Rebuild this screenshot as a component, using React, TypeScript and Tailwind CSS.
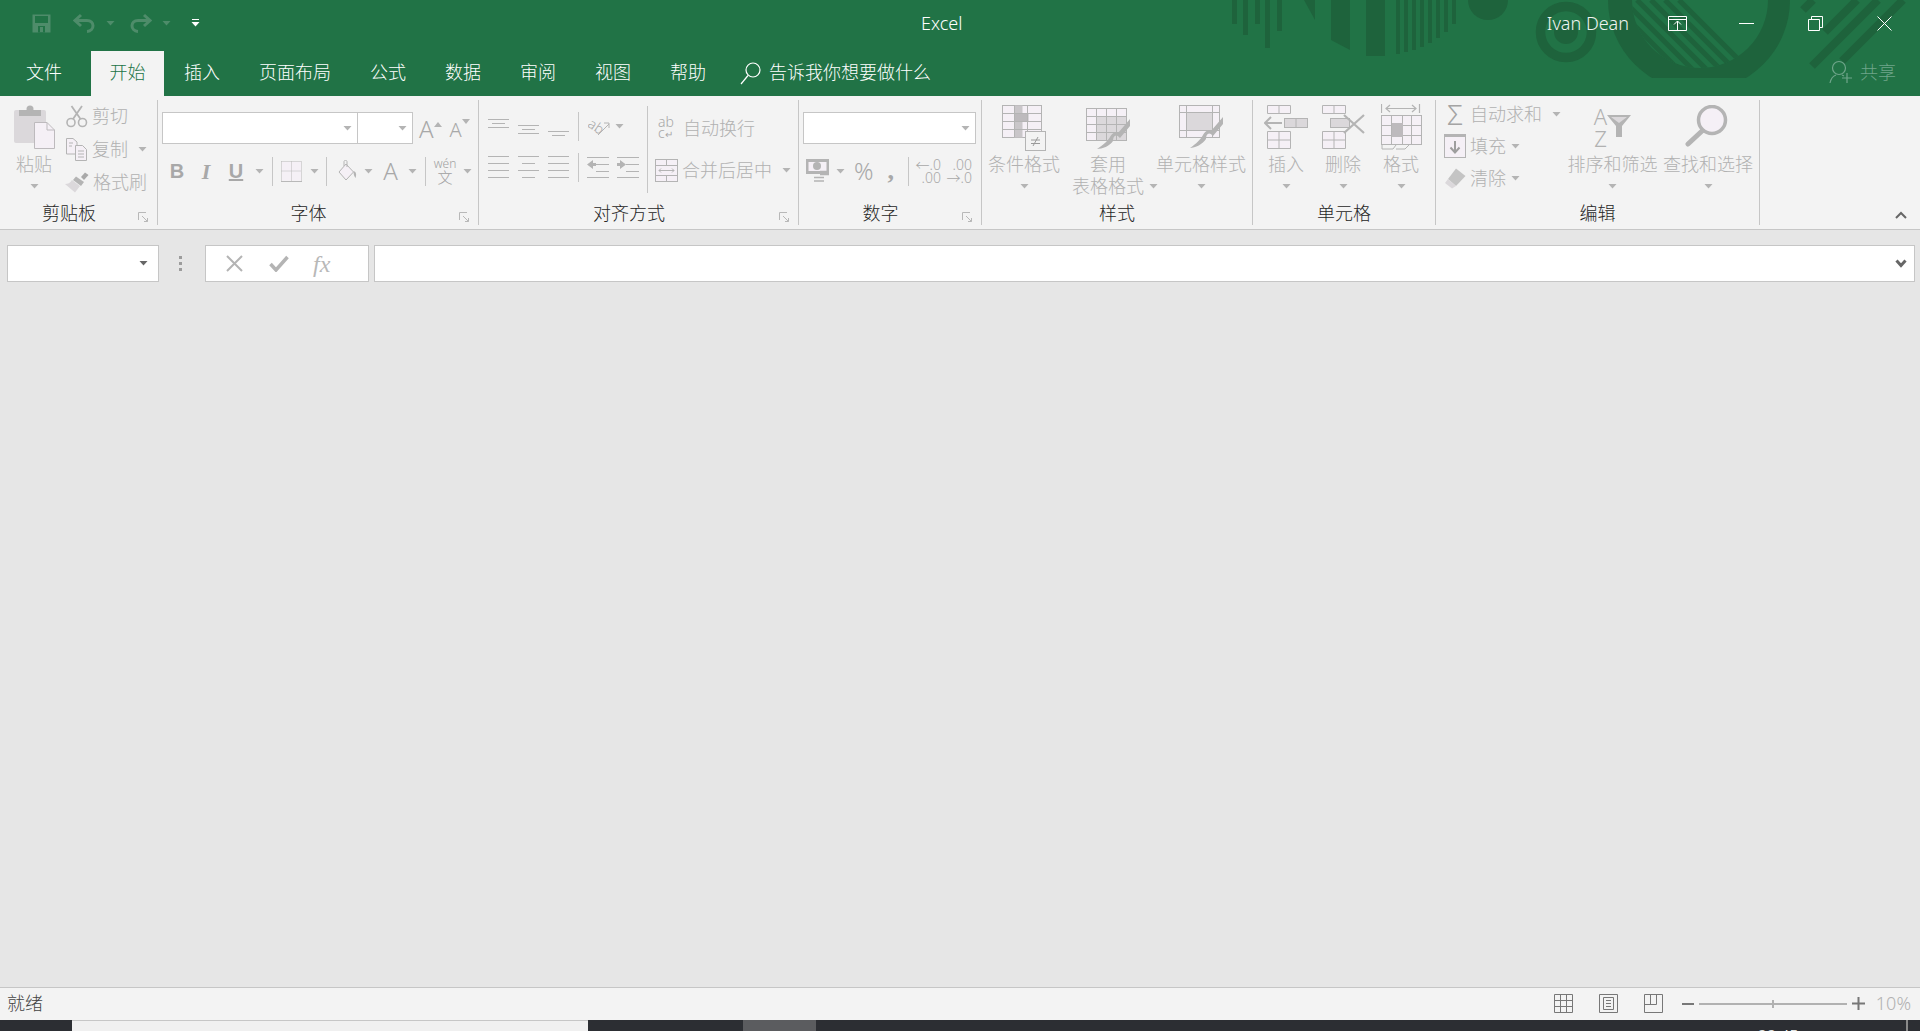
import type { ReactNode } from "react";

const G = "#b4b4b4"; // disabled icon stroke
const L = "#f5f0f6"; // disabled icon fill
const M = "#dbd8db"; // disabled icon mid fill

function Caret({ className = "", color = G }: { className?: string; color?: string }) {
  return (
    <svg width="9" height="5" viewBox="0 0 9 5" className={`shrink-0 ${className}`}>
      <path d="M0.5 0H8.5L4.5 4.5z" fill={color} />
    </svg>
  );
}

function Sep({ className = "" }: { className?: string }) {
  return <div className={`h-[29px] w-px shrink-0 bg-[#c6c6c6] ${className}`} />;
}

function Launcher() {
  return (
    <svg width="11" height="11" viewBox="0 0 11 11" className="mb-[2px] mr-[8px] shrink-0">
      <path d="M0.5 8V0.5H8M4 4L9.5 9.5M6 9.5H9.5V6" fill="none" stroke="#b8b8b8" />
    </svg>
  );
}

function Group({ className, label, launcher, children }: { className: string; label: string; launcher?: boolean; children: ReactNode }) {
  return (
    <div className={`flex h-[125px] shrink-0 flex-col border-r border-[#c6c6c6] ${className}`}>
      <div className="h-[104px]">{children}</div>
      <div className="flex h-[21px] items-end">
        <span className="flex-1 text-center text-[18px] leading-[24px] text-[#262626]">{label}</span>
        {launcher && <Launcher />}
      </div>
    </div>
  );
}

function BigButton({ className, icon, lines, caretInline }: { className: string; icon: ReactNode; lines: string[]; caretInline?: boolean }) {
  return (
    <div className={`flex shrink-0 flex-col items-center text-[18px] leading-[22px] text-[#b1b1b1] ${className}`}>
      <div className="flex h-[53px] justify-center pt-[5px]">{icon}</div>
      <div className="h-[22px] whitespace-nowrap">{lines[0]}</div>
      {caretInline ? (
        <div className="flex h-[22px] items-center gap-[5px] whitespace-nowrap pl-[14px]">
          {lines[1]}
          <Caret />
        </div>
      ) : (
        <div className="flex h-[22px] items-center">
          <Caret />
        </div>
      )}
    </div>
  );
}

function Box({ className }: { className: string }) {
  return (
    <div className={`flex h-[32px] shrink-0 items-center justify-end border border-[#c6c6c6] bg-white pr-[5px] ${className}`}>
      <Caret />
    </div>
  );
}

function SmallRow({ className = "", icon, text, caret, caretClass }: { className?: string; icon: ReactNode; text: string; caret?: boolean; caretClass?: string }) {
  return (
    <div className={`flex items-center text-[18px] text-[#b1b1b1] ${className}`}>
      {icon}
      <span className="ml-[4px] whitespace-nowrap">{text}</span>
      {caret && <Caret className={caretClass} />}
    </div>
  );
}

function AlignLines({ rows, short = false, className = "" }: { rows: number; short?: boolean; className?: string }) {
  const h = rows === 2 ? 8 : rows === 3 ? 15 : 21;
  const gap = rows === 4 ? 7 : 7;
  return (
    <svg width="21" height={h + 1} viewBox={`0 0 21 ${h + 1}`} className={`shrink-0 ${className}`}>
      {Array.from({ length: rows }).map((_, i) => (
        <path key={i} d={`M${short && i % 2 ? 4 : 0} ${i * gap + 0.5}H${short && i % 2 ? 17 : 21}`} stroke={G} fill="none" />
      ))}
    </svg>
  );
}

function VAlign({ offset }: { offset: number }) {
  return (
    <svg width="21" height="24" viewBox="0 0 21 24" className="shrink-0">
      <path d={`M0 ${offset + 0.5}H21M4 ${offset + 4.5}H17M0 ${offset + 8.5}H21`} stroke={G} fill="none" />
    </svg>
  );
}

function Indent({ dir }: { dir: "left" | "right" }) {
  const lines = "M9 0.5H22M9 7.5H22M9 14.5H22M0 20.5H22M0 0.5H9";
  const arrow = dir === "left" ? "M0 7.5L6 3V6H9V9H6V12z" : "M9 7.5L3 3V6H0V9H3V12z";
  return (
    <svg width="22" height="21" viewBox="0 0 22 21" className="shrink-0">
      <path d={lines} stroke={G} fill="none" />
      <path d={arrow} fill={G} />
    </svg>
  );
}

function PasteIcon() {
  return (
    <svg width="41" height="44" viewBox="0 0 41 44">
      <rect x="0" y="5" width="32" height="33" rx="2" fill={M} />
      <rect x="5" y="5" width="22" height="6" fill={G} />
      <circle cx="16" cy="4" r="3.5" fill={G} />
      <path d="M20.5 17.5H33L40.5 25V43.5H20.5z" fill={L} stroke="#bdbabd" />
      <path d="M33 17.5V25H40.5" fill="none" stroke="#bdbabd" />
    </svg>
  );
}

function CutIcon() {
  return (
    <svg width="22" height="23" viewBox="0 0 22 23">
      <circle cx="5" cy="17.5" r="4" fill="none" stroke={G} strokeWidth="1.6" />
      <circle cx="16.5" cy="17.5" r="4" fill="none" stroke={G} strokeWidth="1.6" />
      <path d="M7 14L16 1M14.5 14L5.5 1" stroke={G} strokeWidth="1.8" fill="none" />
    </svg>
  );
}

function CopyIcon() {
  return (
    <svg width="22" height="23" viewBox="0 0 22 23">
      <path d="M0.5 0.5H7L11 4V16H0.5z" fill={L} stroke={G} />
      <path d="M9.5 7.5H16.5L20.5 11.5V22.5H9.5z" fill={L} stroke={G} />
      <path d="M3 5H7M3 8H6M12 13H18M12 16H18M12 19H18" stroke={G} fill="none" />
    </svg>
  );
}

function BrushIcon() {
  return (
    <svg width="24" height="21" viewBox="0 0 24 21">
      <path d="M16 5L20 0.5L23.5 3L19 8z" fill="#a9a9a9" />
      <path d="M11 4.5L19 10L16 14L8 8z" fill={G} />
      <path d="M7 8L15 14L10 20.5L0 12C3 12 5 11 7 8z" fill={M} />
    </svg>
  );
}

function BordersIcon() {
  return (
    <svg width="21" height="21" viewBox="0 0 21 21">
      <rect x="0.5" y="0.5" width="20" height="19" fill={L} />
      <path d="M0.5 0.5H20.5V19.5M0.5 0.5V19.5M10.5 0.5V19.5M0.5 10H20.5" stroke="#b8b8b8" strokeDasharray="1 1" fill="none" />
      <path d="M0 20.5H21" stroke="#b8b8b8" fill="none" />
    </svg>
  );
}

function FillIcon() {
  return (
    <svg width="20" height="22" viewBox="0 0 20 22">
      <path d="M8 4L15.5 12L8 20L1 12z" fill={L} stroke={G} />
      <path d="M6 6V1.5C6 0 9 0 9 1.5V7" fill="none" stroke={G} />
      <path d="M15.5 11C18.5 12 18.5 15 17.5 18C16 16 15.5 14 15.5 11z" fill={G} />
    </svg>
  );
}

function WrapIcon() {
  return (
    <div className="flex w-[17px] shrink-0 flex-col text-[14px] leading-[11px] text-[#a8a8a8]">
      <span>ab</span>
      <span>
        c<span className="text-[10px]">↵</span>
      </span>
    </div>
  );
}

function MergeIcon() {
  return (
    <svg width="23" height="23" viewBox="0 0 23 23" className="shrink-0">
      <rect x="0.5" y="0.5" width="22" height="22" fill={L} stroke={G} />
      <path d="M0.5 6.5H22.5M0.5 16.5H22.5M11.5 0.5V6.5M11.5 16.5V22.5" stroke={G} fill="none" />
      <path d="M4 11.5H19M6 9.5L4 11.5L6 13.5M17 9.5L19 11.5L17 13.5" stroke={G} fill="none" />
    </svg>
  );
}

function CurrencyIcon() {
  return (
    <svg width="24" height="24" viewBox="0 0 24 24" className="shrink-0">
      <rect x="0" y="0" width="23" height="15" fill={G} />
      <rect x="2.5" y="3" width="18" height="9" fill={L} />
      <circle cx="11" cy="7" r="4" fill={G} />
      <path d="M14 12.5H23M14 15.5H23M8 18.5H18M8 22H18" stroke={G} strokeWidth="1.5" fill="none" />
    </svg>
  );
}

function CondIcon() {
  const v = [0.5, 12.5, 25.5, 39.5];
  return (
    <svg width="44" height="46" viewBox="0 0 44 46">
      <rect x="0.5" y="0.5" width="39" height="32" fill={L} stroke={G} />
      <rect x="12.5" y="0.5" width="8" height="32" fill="#c9c6c9" />
      <rect x="12.5" y="8" width="14" height="9" fill="#bdbabd" />
      <path d={`M${v[1]} 0V32M${v[2]} 0V32M0 8.5H40M0 16.5H40M0 24.5H40`} stroke={G} fill="none" />
      <rect x="23.5" y="26.5" width="20" height="19" fill="#f3f3f3" stroke={G} />
      <path d="M29 35H38M29 38.5H38M36 32L31 41" stroke="#9a9a9a" fill="none" />
    </svg>
  );
}

function TableIcon() {
  return (
    <svg width="44" height="42" viewBox="0 0 44 42" className="mt-[3px]">
      <rect x="0.5" y="0.5" width="40" height="32" fill={L} stroke={G} />
      <rect x="10" y="8" width="30" height="24" fill={M} />
      <path d="M10.5 0V32M20.5 0V32M30.5 0V32M0 8.5H40M0 16.5H40M0 24.5H40" stroke={G} fill="none" />
      <path d="M44 11V18L34 30C30 25 27 28 27 33C24 38 16 41 11 41C17 37 22 33 24 29C26 25 30 23 32 25z" fill={G} />
    </svg>
  );
}

function CellStyleIcon() {
  return (
    <svg width="44" height="44" viewBox="0 0 44 44" className="mt-[0px]">
      <rect x="0.5" y="0.5" width="40" height="32" fill={L} stroke={G} />
      <rect x="7" y="7" width="27" height="19" fill={M} />
      <path d="M7.5 0V32M33.5 0V32M0 7.5H40M0 25.5H40" stroke={G} fill="none" />
      <path d="M44 12V19L34 31C30 26 27 29 27 34C24 39 16 43 11 43C17 39 22 34 24 30C26 26 30 24 32 26z" fill={G} />
    </svg>
  );
}

function InsertIcon() {
  return (
    <svg width="44" height="44" viewBox="0 0 44 44">
      <path d="M3.5 0.5H26.5V8.5H3.5zM15 0V8M3.5 26.5H26.5V43.5H3.5zM15 26V43M3 35H26" fill={L} stroke={G} />
      <rect x="20.5" y="13.5" width="23" height="9" fill={M} stroke={G} />
      <path d="M32 13V22" stroke={G} />
      <path d="M1 18H18M7 12L1 18L7 24" fill="none" stroke={G} strokeWidth="2" />
    </svg>
  );
}

function DeleteIcon() {
  return (
    <svg width="43" height="44" viewBox="0 0 43 44">
      <path d="M0.5 0.5H23.5V8.5H0.5zM12 0V8M0.5 26.5H23.5V43.5H0.5zM12 26V43M0 35H24" fill={L} stroke={G} />
      <rect x="8.5" y="13.5" width="19" height="9" fill={M} stroke={G} />
      <path d="M22 10L42 28M42 10L22 28" stroke={G} strokeWidth="2.2" fill="none" />
    </svg>
  );
}

function FormatIcon() {
  return (
    <svg width="41" height="47" viewBox="0 0 41 47" className="-mt-[2px]">
      <path d="M0.5 1V10M38.5 1V10M5 5.5H35M9 2L5 5.5L9 9M31 2L35 5.5L31 9" stroke={G} fill="none" strokeWidth="1.2" />
      <rect x="0.5" y="12.5" width="40" height="29" fill={L} stroke={G} />
      <path d="M10.5 12V41M21.5 12V41M30.5 12V41M0 22.5H40M0 32.5H40" stroke={G} fill="none" />
      <rect x="11" y="20" width="11" height="14" fill="#bdbabd" />
      <path d="M1 42V46H12L15 42M15 46H24L28 42" stroke={G} fill="none" />
    </svg>
  );
}

function FillDownIcon() {
  return (
    <svg width="22" height="24" viewBox="0 0 22 24" className="shrink-0">
      <rect x="0.5" y="0.5" width="21" height="23" fill={L} stroke={G} />
      <rect x="0" y="0" width="22" height="3" fill={G} />
      <path d="M11 7V18M6.5 13.5L11 18.5L15.5 13.5" stroke="#9e9e9e" strokeWidth="2" fill="none" />
    </svg>
  );
}

function EraserIcon() {
  return (
    <svg width="22" height="21" viewBox="0 0 22 21" className="shrink-0">
      <path d="M12 0.5L21.5 8L12 18L4 11z" fill="#c4c4c4" />
      <path d="M4 11L12 18L8 20.5L1 15z" fill={M} />
    </svg>
  );
}

function FunnelIcon() {
  return (
    <svg width="24" height="22" viewBox="0 0 24 22" className="mt-[10px] shrink-0">
      <path d="M0 0H24L15 11V22H9V11z" fill={G} />
      <path d="M4 2H20L12 8z" fill={M} />
    </svg>
  );
}

function FindIcon() {
  return (
    <svg width="46" height="42" viewBox="0 0 46 42">
      <circle cx="27" cy="15" r="13.5" fill={L} stroke={G} strokeWidth="3.5" />
      <path d="M17 26L3 39" stroke={G} strokeWidth="5" strokeLinecap="round" />
    </svg>
  );
}

function Pattern() {
  const bars = [
    [1232, 24],
    [1243, 35],
    [1255, 24],
    [1265, 48],
    [1277, 31],
    [1396, 54],
    [1404, 52],
    [1412, 50],
    [1420, 47],
    [1428, 43],
    [1436, 38],
    [1444, 32],
    [1452, 24],
  ];
  const stripes = [1567, 1581, 1595, 1609, 1623, 1637, 1651, 1665, 1679];
  return (
    <svg width="1920" height="96" viewBox="0 0 1920 96" className="pointer-events-none absolute left-0 top-0">
      <defs>
        <clipPath id="bowl">
          <rect x="1600" y="0" width="200" height="78" />
        </clipPath>
        <clipPath id="inner">
          <circle cx="1700" cy="0" r="68" />
        </clipPath>
      </defs>
      <g fill="#1e633c">
        {bars.map(([x, h]) => (
          <rect key={x} x={x} y="0" width={x < 1300 ? 5 : 4} height={h} />
        ))}
        <path d="M1304 0H1315V20z" />
        <path d="M1331 0H1350V50L1331 40z" />
        <path d="M1366 0H1385V56H1366z" />
        <circle cx="1488" cy="0" r="20" />
        <circle cx="1566" cy="32" r="25.5" fill="none" stroke="#1e633c" strokeWidth="9.5" />
        <circle cx="1566" cy="32" r="12" />
        <g clipPath="url(#bowl)">
          <circle cx="1699" cy="0" r="91" />
        </g>
        <circle cx="1700" cy="0" r="68" fill="#217346" />
        <g clipPath="url(#inner)" stroke="#1e633c" strokeWidth="5">
          {stripes.map((c) => (
            <path key={c} d={`M${c} 0L${c + 100} 100`} />
          ))}
        </g>
        <g stroke="#1e633c" strokeWidth="8">
          <path d="M1813 0L1803 10" />
          <path d="M1857 0L1825 32" />
          <path d="M1878 0L1812 66" />
          <path d="M1903 0L1842 61" />
        </g>
      </g>
    </svg>
  );
}

function TitleRow() {
  return (
    <div className="relative flex h-[51px] items-start pt-[10px] text-white">
      <div className="flex h-[26px] items-center pl-[32px]">
        <svg width="19" height="19" viewBox="0 0 19 19" className="shrink-0">
          <path d="M0.5 0.5H18.5V18.5H0.5z" fill="#4e8c6a" />
          <rect x="3" y="2" width="13" height="7" fill="#217346" />
          <rect x="6" y="12" width="7" height="6.5" fill="#217346" />
          <rect x="8" y="13" width="3" height="5" fill="#4e8c6a" />
        </svg>
        <svg width="22" height="20" viewBox="0 0 22 20" className="ml-[22px] shrink-0">
          <path d="M8 2L2 7.5L8 13M2 7.5H14C22 7.5 22 18 14 18.5" fill="none" stroke="#4e8c6a" strokeWidth="3" />
        </svg>
        <Caret className="ml-[11px]" color="#4e8c6a" />
        <svg width="22" height="20" viewBox="0 0 22 20" className="ml-[15px] shrink-0">
          <path d="M14 2L20 7.5L14 13M20 7.5H8C0 7.5 0 18 8 18.5" fill="none" stroke="#4e8c6a" strokeWidth="3" />
        </svg>
        <Caret className="ml-[10px]" color="#4e8c6a" />
        <svg width="9" height="8" viewBox="0 0 9 8" className="ml-[20px] shrink-0">
          <path d="M1 0.5H8" stroke="white" />
          <path d="M0.5 3H8.5L4.5 7.5z" fill="white" />
        </svg>
      </div>
      <div className="flex h-[26px] flex-1 items-center pl-[721px] text-[18px]">Excel</div>
      <div className="flex h-[26px] items-center pr-[28px]">
        <span className="text-[18px] text-[#f0f5f2]">Ivan Dean</span>
        <svg width="19" height="15" viewBox="0 0 19 15" className="ml-[39px] shrink-0">
          <path d="M0.5 0.5H18.5V14.5H0.5zM0.5 3.5H18.5M9.5 14V5M6 8.5L9.5 5L13 8.5" fill="none" stroke="white" />
        </svg>
        <svg width="15" height="1" viewBox="0 0 15 1" className="ml-[52px] shrink-0">
          <path d="M0 0.5H15" stroke="white" />
        </svg>
        <svg width="15" height="15" viewBox="0 0 15 15" className="ml-[54px] shrink-0">
          <path d="M0.5 3.5H11.5V14.5H0.5zM3.5 3V0.5H14.5V11.5H12" fill="none" stroke="white" />
        </svg>
        <svg width="15" height="15" viewBox="0 0 15 15" className="ml-[54px] shrink-0">
          <path d="M0.5 0.5L14.5 14.5M14.5 0.5L0.5 14.5" fill="none" stroke="white" />
        </svg>
      </div>
    </div>
  );
}

function TabRow() {
  const tabs = ["插入", "页面布局", "公式", "数据", "审阅", "视图", "帮助"];
  return (
    <div className="relative flex h-[45px] items-stretch text-[18px] leading-[42px] text-white">
      <div className="w-[91px] pl-[26px]">文件</div>
      <div className="w-[73px] bg-[#f3f3f3] text-center text-[#217346]">开始</div>
      <div className="ml-[20px] flex gap-[39px]">
        {tabs.map((t) => (
          <div key={t}>{t}</div>
        ))}
      </div>
      <div className="ml-[34px] flex h-[42px] items-center">
        <svg width="21" height="24" viewBox="0 0 21 24" className="mt-[2px] shrink-0">
          <circle cx="13" cy="9" r="7" fill="none" stroke="white" strokeWidth="1.2" />
          <path d="M8 14.5L1 23" stroke="white" strokeWidth="1.2" />
        </svg>
        <span className="ml-[8px]">告诉我你想要做什么</span>
      </div>
      <div className="ml-auto flex h-[42px] items-center pr-[24px] text-[#6fa58a]">
        <svg width="24" height="24" viewBox="0 0 24 24" className="shrink-0">
          <circle cx="10" cy="8" r="6.5" fill="none" stroke="#6fa58a" strokeWidth="1.2" />
          <path d="M1 23C2 18 4 16 7 15M13 15L15 16M18 13V23M13 18H23" fill="none" stroke="#6fa58a" strokeWidth="1.2" />
        </svg>
        <span className="ml-[7px]">共享</span>
      </div>
    </div>
  );
}

function Ribbon() {
  return (
    <div className="flex h-[134px] shrink-0 border-b border-[#c6c6c6] bg-[#f3f3f3] pt-[4px]">
      <Group className="w-[158px]" label="剪贴板" launcher>
        <div className="flex">
          <BigButton className="ml-[15px] w-[38px]" icon={<PasteIcon />} lines={["粘贴"]} />
          <div className="ml-[13px] flex flex-col">
            <SmallRow className="h-[33px]" icon={<CutIcon />} text="剪切" />
            <SmallRow className="h-[33px]" icon={<CopyIcon />} text="复制" caret caretClass="ml-[10px]" />
            <SmallRow className="-ml-[1px] h-[33px]" icon={<BrushIcon />} text="格式刷" />
          </div>
        </div>
      </Group>

      <Group className="w-[321px]" label="字体" launcher>
        <div className="flex pl-[4px] pt-[12px]">
          <Box className="w-[196px]" />
          <Box className="-ml-px w-[56px]" />
          <span className="ml-[6px] flex h-[32px] items-end">
            <span className="text-[24px] leading-[30px] text-[#a8a8a8]">A</span>
            <svg width="8" height="5" viewBox="0 0 8 5" className="mb-[17px] shrink-0">
              <path d="M0 5H8L4 0z" fill={G} />
            </svg>
          </span>
          <span className="ml-[8px] flex h-[32px] items-end">
            <span className="text-[20px] leading-[28px] text-[#a8a8a8]">A</span>
            <svg width="8" height="5" viewBox="0 0 8 5" className="mb-[20px] shrink-0">
              <path d="M0 0H8L4 5z" fill={G} />
            </svg>
          </span>
        </div>
        <div className="mt-[11px] flex h-[32px] items-center pl-[8px] text-[#a8a8a8]">
          <span className="w-[22px] text-center font-['Liberation_Sans'] text-[20px] font-bold">B</span>
          <span className="ml-[7px] w-[22px] text-center font-['Liberation_Serif'] text-[22px] font-bold italic">I</span>
          <span className="ml-[8px] w-[22px] text-center font-['Liberation_Sans'] text-[20px] font-bold underline">U</span>
          <Caret className="ml-[8px]" />
          <Sep className="ml-[8px]" />
          <div className="ml-[8px]">
            <BordersIcon />
          </div>
          <Caret className="ml-[8px]" />
          <Sep className="ml-[7px]" />
          <div className="ml-[11px]">
            <FillIcon />
          </div>
          <Caret className="ml-[6px]" />
          <span className="ml-[9px] w-[17px] text-center text-[24px]">A</span>
          <Caret className="ml-[9px]" />
          <Sep className="ml-[8px]" />
          <div className="ml-[8px] flex w-[22px] flex-col items-center text-[12px] leading-[12px] text-[#a0a0a0]">
            <span>wén</span>
            <span className="text-[15px] leading-[15px]">文</span>
          </div>
          <Caret className="ml-[7px]" />
        </div>
      </Group>

      <Group className="w-[320px]" label="对齐方式" launcher>
        <div className="flex">
          <div className="w-[168px] pl-[9px]">
            <div className="flex items-center pt-[12px]">
              <VAlign offset={4} />
              <div className="ml-[9px]">
                <VAlign offset={10} />
              </div>
              <div className="ml-[9px]">
                <VAlign offset={16} />
              </div>
              <Sep className="ml-[9px]" />
              <svg width="22" height="20" viewBox="0 0 22 20" className="ml-[9px] shrink-0">
                <text x="1" y="14" fontSize="14" fill="#a8a8a8" transform="rotate(35 8 8)">ab</text>
                <path d="M10 18L21 7M16 6H21V11" stroke={G} fill="none" />
              </svg>
              <Caret className="ml-[5px]" />
            </div>
            <div className="mt-[10px] flex h-[32px] items-center">
              <AlignLines rows={4} />
              <AlignLines rows={4} short className="ml-[9px]" />
              <AlignLines rows={4} className="ml-[9px]" />
              <Sep className="ml-[9px]" />
              <div className="ml-[8px]">
                <Indent dir="left" />
              </div>
              <div className="ml-[8px]">
                <Indent dir="right" />
              </div>
            </div>
          </div>
          <div className="mt-[6px] h-[87px] w-px shrink-0 bg-[#c6c6c6]" />
          <div className="flex flex-col">
            <div className="mt-[12px] flex h-[32px] items-center pl-[10px] text-[18px] text-[#b1b1b1]">
              <WrapIcon />
              <span className="ml-[8px] whitespace-nowrap">自动换行</span>
            </div>
            <div className="mt-[10px] flex h-[32px] items-center pl-[7px] text-[18px] text-[#b1b1b1]">
              <MergeIcon />
              <span className="ml-[4px] whitespace-nowrap">合并后居中</span>
              <Caret className="ml-[10px]" />
            </div>
          </div>
        </div>
      </Group>

      <Group className="w-[183px]" label="数字" launcher>
        <div className="pl-[4px] pt-[12px]">
          <Box className="w-[173px]" />
        </div>
        <div className="mt-[11px] flex h-[32px] items-center pl-[7px] text-[#a8a8a8]">
          <CurrencyIcon />
          <Caret className="ml-[6px]" />
          <span className="ml-[9px] text-[24px] font-light leading-[32px]">%</span>
          <span className="ml-[14px] font-['Liberation_Serif'] text-[26px] font-bold leading-[26px]">,</span>
          <Sep className="ml-[14px]" />
          <div className="ml-[8px] flex w-[24px] flex-col items-end text-[14px] leading-[13px]">
            <span>←.0</span>
            <span>.00</span>
          </div>
          <div className="ml-[7px] flex w-[24px] flex-col items-end text-[14px] leading-[13px]">
            <span>.00</span>
            <span>→.0</span>
          </div>
        </div>
      </Group>

      <Group className="w-[271px]" label="样式">
        <div className="flex">
          <BigButton className="w-[84px]" icon={<CondIcon />} lines={["条件格式"]} />
          <BigButton className="w-[84px]" icon={<TableIcon />} lines={["套用", "表格格式"]} caretInline />
          <BigButton className="w-[102px]" icon={<CellStyleIcon />} lines={["单元格样式"]} />
        </div>
      </Group>

      <Group className="w-[183px]" label="单元格">
        <div className="flex">
          <BigButton className="w-[66px]" icon={<InsertIcon />} lines={["插入"]} />
          <BigButton className="w-[48px]" icon={<DeleteIcon />} lines={["删除"]} />
          <BigButton className="w-[68px]" icon={<FormatIcon />} lines={["格式"]} />
        </div>
      </Group>

      <Group className="w-[324px]" label="编辑">
        <div className="flex">
          <div className="-mt-[2px] flex w-[131px] flex-col pl-[8px]">
            <SmallRow
              className="h-[32px]"
              icon={<span className="w-[22px] text-center text-[28px] leading-[32px] text-[#a4a4a4]">Σ</span>}
              text="自动求和"
              caret
              caretClass="ml-[10px]"
            />
            <SmallRow className="h-[32px]" icon={<FillDownIcon />} text="填充" caret caretClass="ml-[5px]" />
            <SmallRow className="h-[32px]" icon={<EraserIcon />} text="清除" caret caretClass="ml-[5px]" />
          </div>
          <BigButton
            className="w-[91px]"
            icon={
              <div className="flex">
                <div className="flex flex-col items-center text-[22px] leading-[22px] text-[#b1b1b1]">
                  <span>A</span>
                  <span>Z</span>
                </div>
                <FunnelIcon />
              </div>
            }
            lines={["排序和筛选"]}
          />
          <BigButton className="w-[100px]" icon={<FindIcon />} lines={["查找和选择"]} />
        </div>
      </Group>

      <div className="flex flex-1 items-end justify-end pb-[10px] pr-[13px]">
        <svg width="12" height="8" viewBox="0 0 12 8">
          <path d="M1 7L6 2L11 7" fill="none" stroke="#666666" strokeWidth="2" />
        </svg>
      </div>
    </div>
  );
}

function FormulaBar() {
  return (
    <div className="flex h-[58px] shrink-0 items-start bg-[#e6e6e6] pt-[15px]">
      <div className="ml-[7px] flex h-[37px] w-[152px] items-center justify-end border border-[#c6c6c6] bg-white pr-[10px]">
        <Caret color="#666666" />
      </div>
      <div className="ml-[20px] flex h-[37px] w-[3px] flex-col items-center justify-center gap-[3px]">
        <span className="h-[3px] w-[3px] bg-[#9c9c9c]" />
        <span className="h-[3px] w-[3px] bg-[#9c9c9c]" />
        <span className="h-[3px] w-[3px] bg-[#9c9c9c]" />
      </div>
      <div className="ml-[23px] flex h-[37px] w-[164px] items-center border border-[#c6c6c6] bg-white">
        <svg width="17" height="17" viewBox="0 0 17 17" className="ml-[20px] shrink-0">
          <path d="M1 1L16 16M16 1L1 16" fill="none" stroke={G} strokeWidth="2" />
        </svg>
        <svg width="20" height="17" viewBox="0 0 20 17" className="ml-[26px] shrink-0">
          <path d="M1.5 9L7 15L18.5 2" fill="none" stroke={G} strokeWidth="3.5" />
        </svg>
        <span className="ml-[24px] font-['Liberation_Serif'] text-[24px] italic leading-[30px] text-[#b8b8b8]">fx</span>
      </div>
      <div className="ml-[5px] flex h-[37px] w-[1541px] items-center justify-end border border-[#c6c6c6] bg-white pr-[7px]">
        <svg width="12" height="9" viewBox="0 0 12 9">
          <path d="M1.5 1.5L6 6.5L10.5 1.5" fill="none" stroke="#666666" strokeWidth="3" />
        </svg>
      </div>
    </div>
  );
}

function StatusBar() {
  const grid = "#777777";
  return (
    <div className="flex h-[33px] shrink-0 items-center border-t border-[#c6c6c6] bg-[#f3f3f3] pb-[1px] pl-[7px] pr-[9px]">
      <span className="text-[18px] text-[#444444]">就绪</span>
      <div className="ml-auto flex items-center">
        <svg width="19" height="19" viewBox="0 0 19 19" className="shrink-0">
          <path d="M0.5 0.5H18.5V18.5H0.5zM6.5 0V19M12.5 0V19M0 6.5H19M0 12.5H19" fill="none" stroke={grid} />
        </svg>
        <svg width="19" height="19" viewBox="0 0 19 19" className="ml-[26px] shrink-0">
          <path d="M0.5 0.5H18.5V18.5H0.5zM4.5 3.5H14.5V15.5H4.5zM7 6.5H12M7 9.5H12M7 12.5H12" fill="none" stroke={grid} />
        </svg>
        <svg width="19" height="19" viewBox="0 0 19 19" className="ml-[26px] shrink-0">
          <path d="M0.5 0.5H18.5V18.5H0.5zM0.5 10.5H12.5V0.5M6.5 0V10" fill="none" stroke={grid} />
        </svg>
        <div className="ml-[19px] h-[2px] w-[12px] bg-[#777777]" />
        <div className="ml-[5px] flex h-[8px] w-[148px] items-center bg-[linear-gradient(#b1b1b1,#b1b1b1)] bg-[length:100%_2px] bg-center bg-no-repeat pl-[73px]">
          <div className="h-[8px] w-[2px] bg-[#b1b1b1]" />
        </div>
        <svg width="13" height="13" viewBox="0 0 13 13" className="ml-[5px] shrink-0">
          <path d="M0 6.5H13M6.5 0V13" stroke="#777777" strokeWidth="2" fill="none" />
        </svg>
        <span className="ml-[11px] text-[18px] text-[#b1b1b1]">10%</span>
      </div>
    </div>
  );
}

function Taskbar() {
  return (
    <div className="flex h-[11px] shrink-0 overflow-hidden bg-[#2c2e33]">
      <div className="ml-[72px] w-[516px] border-t border-[#c6c6c6] bg-[#f0f0f0]" />
      <div className="ml-[155px] w-[73px] bg-[#5b5c5f]" />
      <span className="ml-[942px] pt-[6px] text-[16px] leading-[20px] text-white">22:45</span>
      <div className="ml-[108px] w-[2px] bg-[#8a8a8a]" />
    </div>
  );
}

export default function App() {
  return (
    <div className="flex h-[1031px] w-[1920px] flex-col overflow-hidden bg-[#e6e6e6] font-['Noto_Sans','Noto_Sans_CJK_SC',sans-serif] font-light">
      <div className="relative h-[96px] shrink-0 bg-[#217346]">
        <Pattern />
        <TitleRow />
        <TabRow />
      </div>
      <Ribbon />
      <FormulaBar />
      <div className="flex-1" />
      <StatusBar />
      <Taskbar />
    </div>
  );
}
